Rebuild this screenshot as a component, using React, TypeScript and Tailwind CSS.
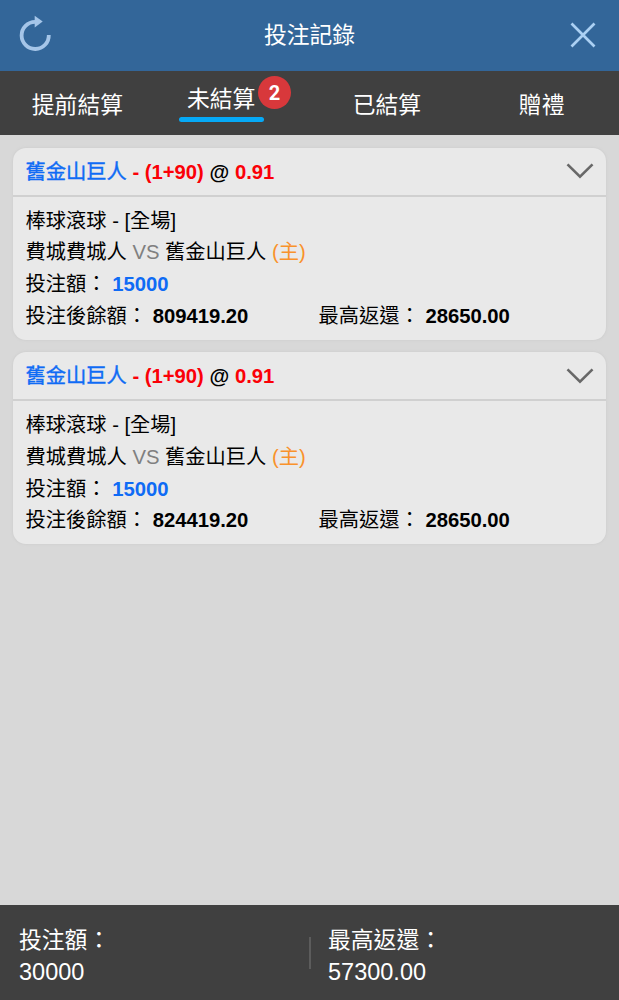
import React from 'react';

type Bet = {
  team: string;
  handicap: string;
  odds: string;
  market: string;
  away: string;
  stake: string;
  balance: string;
  maxReturn: string;
};

const bets: Bet[] = [
  { team: '舊金山巨人', handicap: '(1+90)', odds: '0.91', market: '棒球滾球 - [全場]', away: '費城費城人', stake: '15000', balance: '809419.20', maxReturn: '28650.00' },
  { team: '舊金山巨人', handicap: '(1+90)', odds: '0.91', market: '棒球滾球 - [全場]', away: '費城費城人', stake: '15000', balance: '824419.20', maxReturn: '28650.00' },
];

function RefreshIcon() {
  return (
    <svg width="32" height="39" viewBox="0 0 32 39" fill="none" className="overflow-visible">
      <path d="M16.2 5.8A13.6 13.6 0 1 0 29.8 19" stroke="#a5c5e8" strokeWidth="3.8" />
      <path d="M15.7 -0.3L23.7 5.6L15.7 11.5Z" fill="#a5c5e8" />
    </svg>
  );
}

function CloseIcon() {
  return (
    <svg width="26" height="27" viewBox="0 0 26 27" fill="none">
      <path d="M1.5 1.5L24.5 24.5M24.5 1.5L1.5 24.5" stroke="#abd0f3" strokeWidth="2.7" />
    </svg>
  );
}

function ChevronIcon() {
  return (
    <svg width="28" height="18" viewBox="0 0 28 18" fill="none">
      <path d="M1.5 2.4L14 14.7L26.5 2.4" stroke="#686868" strokeWidth="2.6" />
    </svg>
  );
}

function BetCard({ bet }: { bet: Bet }) {
  return (
    <article className="h-[192px] rounded-[13px] bg-[#e9e9e9] shadow-[0_0_3px_#c8c8c8]">
      <header className="flex h-[49px] items-center justify-between border-b-2 border-[#d0d0d0] pr-[12px] pl-[12.5px]">
        <h2 className="pt-[2px] font-bold text-black">
          <span className="font-normal text-[#0f6bf5] [-webkit-text-stroke:0.4px_#0f6bf5]">{bet.team}</span>
          <span className="text-[#fb0007]"> - {bet.handicap}</span> @ <span className="text-[#fb0007]">{bet.odds}</span>
        </h2>
        <ChevronIcon />
      </header>
      <div className="px-[12.5px] pt-[9px] leading-[31.8px]">
        <p>{bet.market}</p>
        <p>
          {bet.away} <span className="text-[#808080]">VS</span> {bet.team} <span className="text-[#f9922b]">(主)</span>
        </p>
        <p>
          投注額： <b className="text-[#0f6bf5]">{bet.stake}</b>
        </p>
        <div className="flex">
          <p className="w-[293px]">
            投注後餘額： <b>{bet.balance}</b>
          </p>
          <p>
            最高返還： <b>{bet.maxReturn}</b>
          </p>
        </div>
      </div>
    </article>
  );
}

export default function App() {
  return (
    <div className="flex h-[1000px] w-[619px] flex-col overflow-hidden whitespace-nowrap bg-[#d8d8d8] font-['Liberation_Sans','Noto_Sans_CJK_TC',sans-serif] text-[20.25px] text-black">
      <header className="flex h-[71px] shrink-0 items-center justify-between bg-[#336699] pr-[23px] pl-[19px]">
        <RefreshIcon />
        <h1 className="pr-[2px] pb-[2px] text-[22.8px] leading-[34px] text-white">投注記錄</h1>
        <CloseIcon />
      </header>
      <nav className="grid h-[64px] shrink-0 grid-cols-4 bg-[#404040] text-[22.8px] leading-[34px] text-white">
        <div className="flex items-center justify-center pt-[3px]">提前結算</div>
        <div className="flex flex-col items-center pt-[11px] pr-[22px]">
          <div className="relative">
            未結算
            <span className="absolute -top-[6px] left-[71px] flex size-[33px] items-center justify-center rounded-full bg-[#d8383b] font-['Roboto',sans-serif] text-[20px] font-bold">
              2
            </span>
          </div>
          <div className="mt-[1px] h-[5px] w-[85px] rounded-full bg-[#06a9f6]" />
        </div>
        <div className="flex items-center justify-center pt-[3px]">已結算</div>
        <div className="flex items-center justify-center pt-[3px]">贈禮</div>
      </nav>
      <main className="flex flex-1 flex-col gap-[12.6px] px-[13px] pt-[12.5px]">
        {bets.map((bet) => (
          <BetCard key={bet.balance} bet={bet} />
        ))}
      </main>
      <footer className="flex h-[95px] shrink-0 items-center bg-[#404040] text-[22.8px] leading-[32px] text-white">
        <div className="w-[309px] pt-[8px] pl-[19px]">
          <p>投注額：</p>
          <p className="text-[23.5px] leading-[33px]">30000</p>
        </div>
        <div className="h-[32px] w-[2px] bg-[#5c5c5c]" />
        <div className="pt-[8px] pl-[17px]">
          <p>最高返還：</p>
          <p className="text-[23.5px] leading-[33px]">57300.00</p>
        </div>
      </footer>
    </div>
  );
}
